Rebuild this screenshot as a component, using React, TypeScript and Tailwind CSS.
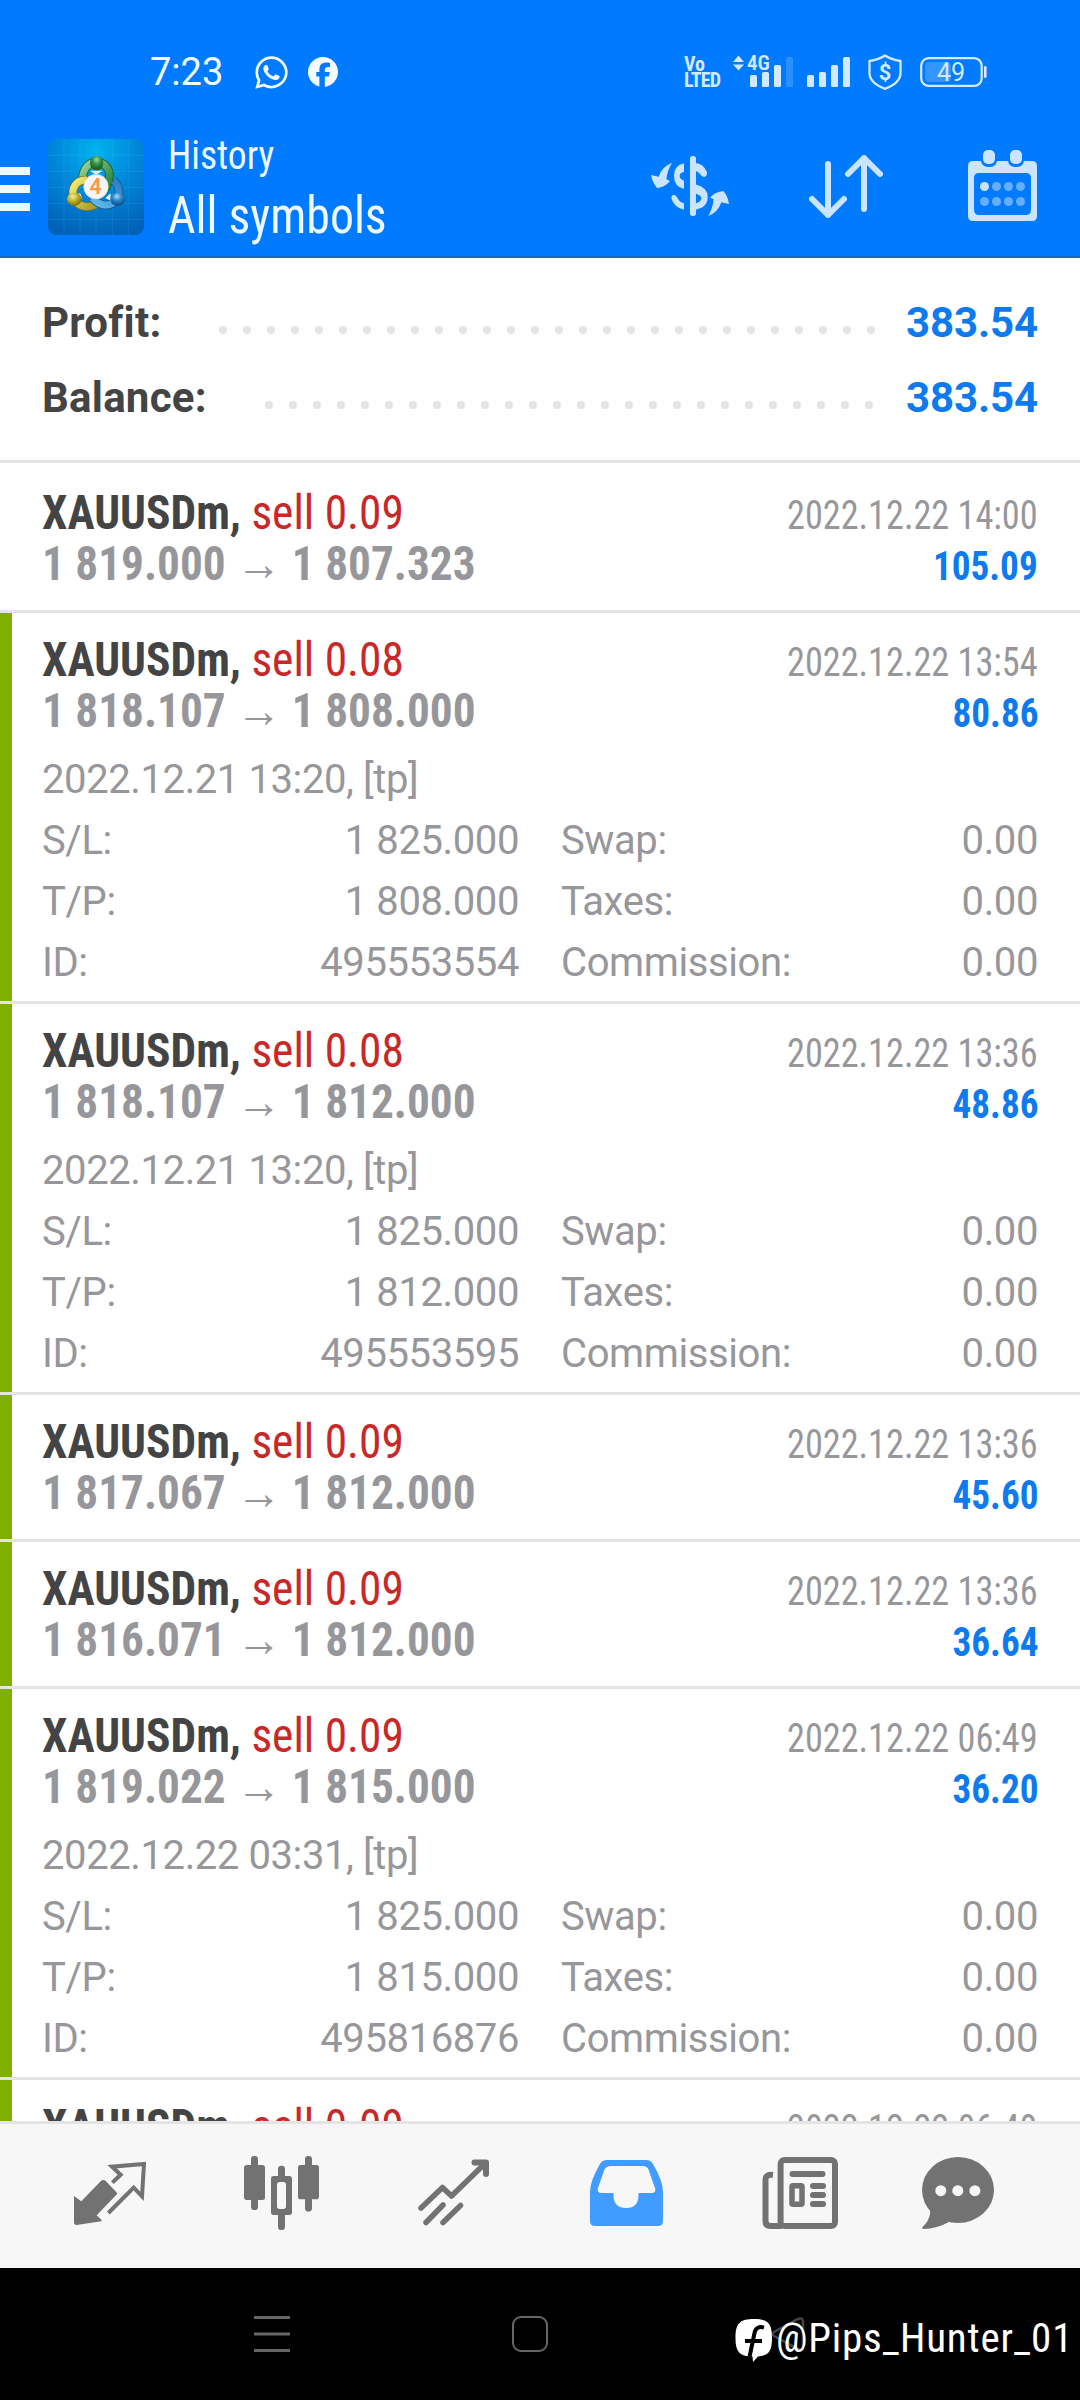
import { FaFacebook, FaWhatsapp } from 'react-icons/fa6';

type Deal = {
  volume: string;
  open: string;
  close: string;
  closedAt: string;
  profit: string;
  takeProfitHit?: boolean;
  details?: { openedAt: string; sl: string; tp: string; id: string };
};

const deals: Deal[] = [
  { volume: '0.09', open: '1 819.000', close: '1 807.323', closedAt: '2022.12.22 14:00', profit: '105.09' },
  {
    volume: '0.08', open: '1 818.107', close: '1 808.000', closedAt: '2022.12.22 13:54', profit: '80.86', takeProfitHit: true,
    details: { openedAt: '2022.12.21 13:20, [tp]', sl: '1 825.000', tp: '1 808.000', id: '495553554' },
  },
  {
    volume: '0.08', open: '1 818.107', close: '1 812.000', closedAt: '2022.12.22 13:36', profit: '48.86', takeProfitHit: true,
    details: { openedAt: '2022.12.21 13:20, [tp]', sl: '1 825.000', tp: '1 812.000', id: '495553595' },
  },
  { volume: '0.09', open: '1 817.067', close: '1 812.000', closedAt: '2022.12.22 13:36', profit: '45.60', takeProfitHit: true },
  { volume: '0.09', open: '1 816.071', close: '1 812.000', closedAt: '2022.12.22 13:36', profit: '36.64', takeProfitHit: true },
  {
    volume: '0.09', open: '1 819.022', close: '1 815.000', closedAt: '2022.12.22 06:49', profit: '36.20', takeProfitHit: true,
    details: { openedAt: '2022.12.22 03:31, [tp]', sl: '1 825.000', tp: '1 815.000', id: '495816876' },
  },
  { volume: '0.09', open: '1 819.022', close: '1 815.000', closedAt: '2022.12.22 06:49', profit: '36.20', takeProfitHit: true },
];

const StatusBar = () => (
  <div className="flex h-[118px] items-center justify-between pt-[26px] pr-[92px] pl-[150px] text-[#f4fbff]">
    <div className="flex items-center">
      <span className="w-[103px] text-[38px] leading-none font-[450]">7:23</span>
      <FaWhatsapp className="size-[37px]" />
      <FaFacebook className="ml-[18px] size-[30px]" />
    </div>
    <div className="flex items-center text-[#d3e9ff]">
      <div className="flex w-[49px] flex-col font-bold font-stretch-[75%]">
        <span className="text-[20px] leading-[16px]">Vo</span>
        <span className="text-[20px] leading-[16px] tracking-[-0.8px]">LTED</span>
      </div>
      <svg className="h-[36px] w-[118px]" viewBox="733 54 118 36" fill="currentColor">
        <path d="M733 62 L738.500 55.500 L744 62Z M733 64.500 L738.500 70.500 L744 64.500Z" />
        <text x="747" y="70" fontSize="21" fontWeight="600" className="font-stretch-[75%]">4G</text>
        <rect x="750" y="75" width="7" height="12" rx="1.500" />
        <rect x="762" y="72" width="7" height="15" rx="1.500" />
        <rect x="774" y="65" width="7" height="22" rx="1.500" />
        <rect x="786" y="57" width="7" height="30" rx="1.500" opacity=".2" />
        <rect x="807" y="75" width="7" height="12" rx="1.500" />
        <rect x="819" y="72" width="7" height="15" rx="1.500" />
        <rect x="831" y="65" width="7" height="22" rx="1.500" />
        <rect x="843" y="57" width="7" height="30" rx="1.500" />
      </svg>
      <svg className="ml-[16px] h-[38px] w-[36px]" viewBox="867 53 36 38">
        <path d="M885 55.500 Q891 59.500 900.500 61 V73 Q900.500 83 885 88.800 Q869.500 83 869.500 73 V61 Q879 59.500 885 55.500Z" fill="none" stroke="currentColor" strokeWidth="2.300" strokeLinejoin="round" />
        <text x="885" y="80" textAnchor="middle" fontSize="22" fontWeight="700" fill="currentColor">$</text>
      </svg>
      <svg className="ml-[17px] h-[32px] w-[68px]" viewBox="920 56 68 32">
        <rect x="921.200" y="58.200" width="60.500" height="27.600" rx="7.500" fill="none" stroke="currentColor" strokeWidth="2.300" />
        <rect x="925" y="62" width="26" height="20" rx="4" fill="currentColor" opacity=".25" />
        <rect x="984" y="66" width="2.600" height="12" rx="1.300" fill="currentColor" />
        <text x="951" y="81" textAnchor="middle" fontSize="25" fill="currentColor">49</text>
      </svg>
    </div>
  </div>
);

const MetaTraderLogo = () => (
  <svg className="ml-[18px] size-[96px]" viewBox="24 27 288 288">
    <defs>
      <radialGradient id="sky" cx="50%" cy="12%" r="90%">
        <stop offset="0" stopColor="#00b4ee" />
        <stop offset=".45" stopColor="#0089dc" />
        <stop offset="1" stopColor="#0062b8" />
      </radialGradient>
      <linearGradient id="green" x1="0" y1="0" x2="1" y2="1">
        <stop offset="0" stopColor="#9bd39a" />
        <stop offset="1" stopColor="#1f7a34" />
      </linearGradient>
      <linearGradient id="yellow" x1="0" y1="0" x2="1" y2="1">
        <stop offset="0" stopColor="#f5ee7a" />
        <stop offset="1" stopColor="#a89a1c" />
      </linearGradient>
      <linearGradient id="blue" x1="1" y1="0" x2="0" y2="1">
        <stop offset="0" stopColor="#2a7cc4" />
        <stop offset="1" stopColor="#62bdf0" />
      </linearGradient>
      <radialGradient id="greenBall" cx="50%" cy="28%" r="65%">
        <stop offset="0" stopColor="#a3d8a0" />
        <stop offset=".5" stopColor="#2f8f42" />
        <stop offset="1" stopColor="#176127" />
      </radialGradient>
      <radialGradient id="yellowBall" cx="40%" cy="30%" r="65%">
        <stop offset="0" stopColor="#f2efa0" />
        <stop offset=".5" stopColor="#c4b62b" />
        <stop offset="1" stopColor="#82760f" />
      </radialGradient>
      <radialGradient id="blueBall" cx="45%" cy="28%" r="65%">
        <stop offset="0" stopColor="#a8d8f5" />
        <stop offset=".5" stopColor="#2a85c8" />
        <stop offset="1" stopColor="#0f5490" />
      </radialGradient>
    </defs>
    <rect x="24" y="27" width="288" height="288" rx="26" fill="url(#sky)" />
    <path d="M72 27V315M120 27V315M168 27V315M217 27V315M265 27V315M24 76H312M24 124H312M24 172H312M24 221H312M24 269H312" stroke="#6fd0ff" strokeOpacity=".2" strokeWidth="2" />
    <g fill="none" strokeLinejoin="round">
      <path d="M130 158 C122 126 142 96 170 96 C200 98 214 124 206 152 C202 166 198 176 190 182" stroke="#14602a" strokeWidth="26" />
      <path d="M130 158 C122 126 142 96 170 96 C200 98 214 124 206 152 C202 166 198 176 190 182" stroke="url(#green)" strokeWidth="21" />
      <path d="M140 150 C108 148 92 176 102 204 C112 230 142 236 166 224" stroke="#857813" strokeWidth="26" />
      <path d="M140 150 C108 148 92 176 102 204 C112 230 142 236 166 224" stroke="url(#yellow)" strokeWidth="21" />
      <path d="M220 152 C242 168 242 202 224 216 C204 232 176 226 158 204" stroke="#12548c" strokeWidth="26" />
      <path d="M220 152 C242 168 242 202 224 216 C204 232 176 226 158 204" stroke="url(#blue)" strokeWidth="21" />
      <path d="M150 122 L168 134 L188 122Z M122 192 L128 210 L114 188Z M196 204 L212 190 L212 212Z" fill="#e8f3ea" />
    </g>
    <ellipse cx="170" cy="99" rx="20" ry="22" fill="url(#greenBall)" />
    <ellipse cx="103" cy="208" rx="22" ry="20" fill="url(#yellowBall)" />
    <ellipse cx="233" cy="208" rx="22" ry="20" fill="url(#blueBall)" />
    <circle cx="168" cy="170" r="37" fill="#f7f5f3" stroke="#cdd3c8" strokeWidth="2" />
    <text x="167" y="192" textAnchor="middle" fontSize="64" fontWeight="600" fill="#f29a4a">4</text>
  </svg>
);

const AppBar = () => (
  <div className="flex h-[138px] items-center text-[#eef8ff]">
    <div className="flex w-[30px] flex-col gap-[10px] pt-1">
      <div className="h-2 bg-current" />
      <div className="h-2 bg-current" />
      <div className="h-2 bg-current" />
    </div>
    <MetaTraderLogo />
    <div className="ml-6 flex-1 pt-px font-stretch-[75%]">
      <p className="origin-left scale-x-[0.94] text-[40px] leading-[56px]">History</p>
      <h1 className="origin-left scale-x-[0.92] text-[52px] leading-[64px]">All symbols</h1>
    </div>
    <svg className="mt-[-2px] h-[60px] w-[78px]" viewBox="33 45 234 180" fill="#cbe4ff">
      <rect x="150" y="45" width="18" height="180" rx="8" />
      <path d="M33 102 L56 107 Q66 76 96 66 Q82 88 79 115 L90 120 Q76 138 51 141 Q37 124 33 102Z" />
      <path d="M267 189 L244 184 Q234 214 205 225 Q218 202 221 175 L210 170 Q226 152 250 150 Q264 166 267 189Z" />
      <path d="M132 67 V93 Q119 95 119 105 Q119 115 132 119 V144 Q102 137 102 105 Q102 72 132 67Z" />
      <path d="M132 187 V206 Q102 200 94 172 Q94 160 104 162 Q110 164 113 172 Q118 184 132 187Z" />
      <path d="M166 66 Q190 68 201 93 Q202 107 192 108 Q184 108 181 100 Q176 92 166 89Z" />
      <path fillRule="evenodd" d="M166 130 Q203 139 203 168 Q203 200 166 206Z M168 158 V187 Q184 182 184 172 Q184 163 168 158Z" />
    </svg>
    <svg className="ml-20 h-[64px] w-[74px]" viewBox="809 155 74 64" fill="none" stroke="#cbe4ff" strokeWidth="6" strokeLinecap="round" strokeLinejoin="round">
      <path d="M828 164V215M812 199L828 215L844 199" />
      <path d="M864 209V158M848 174L864 158L880 174" />
    </svg>
    <svg className="mt-[-3px] mr-[43px] ml-[85px] h-[71px] w-[69px]" viewBox="968 150 69 71" fill="#cbe4ff">
      <path fillRule="evenodd" d="M973 161 H981 Q982 167 989 167 Q996 167 997 161 H1008 Q1009 167 1016 167 Q1023 167 1024 161 H1032 Q1037 161 1037 166 V216 Q1037 221 1032 221 H973 Q968 221 968 216 V166 Q968 161 973 161Z M979 173 Q974 173 974 178 V209 Q974 215 979 215 H1026 Q1031 215 1031 209 V178 Q1031 173 1026 173Z" />
      <rect x="983" y="150" width="12" height="14" rx="5" />
      <rect x="1010" y="150" width="12" height="14" rx="5" />
      <circle cx="984.500" cy="186.500" r="4.500" />
      <g opacity=".5">
        <circle cx="996.500" cy="186.500" r="4.500" />
        <circle cx="1008.500" cy="186.500" r="4.500" />
        <circle cx="1020.500" cy="186.500" r="4.500" />
        <circle cx="984.500" cy="201.500" r="4.500" />
        <circle cx="996.500" cy="201.500" r="4.500" />
        <circle cx="1008.500" cy="201.500" r="4.500" />
        <circle cx="1020.500" cy="201.500" r="4.500" />
      </g>
    </svg>
  </div>
);

const SummaryRow = ({ label, value, dots }: { label: string; value: string; dots: number }) => (
  <div className="flex h-[75px] items-center text-[42px] font-bold">
    <span className="tracking-[0.25px] text-[#444]">{label}</span>
    <div className="ml-[58px] flex flex-1 gap-4 pt-[14px]">
      {Array.from({ length: dots }, (_, i) => (
        <span key={i} className="size-2 rounded-full bg-[#e4e4e4]" />
      ))}
    </div>
    <span className="tracking-[-0.1px] text-[#0d7af0]">{value}</span>
  </div>
);

const DetailRow = ({ left, right }: { left: [string, string]; right: string }) => (
  <div className="flex h-[61px] items-center">
    <div className="flex w-[477px] justify-between">
      <span>{left[0]}</span>
      <span>{left[1]}</span>
    </div>
    <div className="ml-[42px] flex flex-1 justify-between">
      <span>{right}</span>
      <span>0.00</span>
    </div>
  </div>
);

const DealRow = ({ deal }: { deal: Deal }) => (
  <div className="shrink-0 border-b-3 border-[#e4e4e4] bg-white">
    <div className={`pr-[42px] ${deal.takeProfitHit ? 'border-l-12 border-[#7fb000] pl-[30px]' : 'pl-[42px]'} ${deal.details ? 'h-[388px]' : 'h-[144px]'}`}>
      <div className="pt-[21px] leading-[51px] font-stretch-[75%]">
        <div className="flex h-[51px] items-baseline justify-between">
          <p className="origin-left scale-x-[0.946] text-[48px]">
            <span className="font-bold text-[#444]">XAUUSDm, </span>
            <span className="text-[#c92828]">sell {deal.volume}</span>
          </p>
          <span className="origin-right scale-x-[0.906] text-[40px] text-[#97979b]">{deal.closedAt}</span>
        </div>
        <div className="flex h-[51px] items-baseline justify-between font-bold">
          <span className="origin-left scale-x-[0.943] text-[48px] text-[#97979b]">{deal.open} → {deal.close}</span>
          <span className="origin-right scale-x-[0.93] text-[40px] text-[#0d7af0]">{deal.profit}</span>
        </div>
      </div>
      {deal.details && (
        <div className="mt-[13px] text-[40px] tracking-[-0.4px] text-[#97979b]">
          <p className="leading-[61px]">{deal.details.openedAt}</p>
          <DetailRow left={['S/L:', deal.details.sl]} right="Swap:" />
          <DetailRow left={['T/P:', deal.details.tp]} right="Taxes:" />
          <DetailRow left={['ID:', deal.details.id]} right="Commission:" />
        </div>
      )}
    </div>
  </div>
);

const TabBar = () => (
  <nav className="flex h-[147px] shrink-0 items-center border-t-3 border-[#e4e4e4] bg-[#f7f7f7] pb-[7px] pl-[74px] text-[#727272]">
    <svg className="h-[64px] w-[72px]" viewBox="42 66 216 192" fill="currentColor">
      <path d="M42 171 L64 187 L122 127 Q130 119 138 127 L168 158 Q174 163 168 169 L110 229 L125 243 L124 247 L50 258 Q42 258 42 250Z" />
      <path d="M157 131 L182 107 L156 83 L252 75 L246 172 L221 146 L145 222" fill="none" stroke="currentColor" strokeWidth="12" />
    </svg>
    <svg className="ml-[98px] h-[74px] w-[75px]" viewBox="552 51 225 222" fill="currentColor">
      <rect x="573" y="51" width="21" height="162" rx="10" />
      <rect x="552" y="78" width="63" height="105" rx="8" />
      <rect x="654" y="80" width="21" height="193" rx="10" />
      <rect x="633" y="111" width="63" height="117" rx="8" />
      <rect x="651" y="129" width="27" height="81" rx="8" fill="#f7f7f7" />
      <rect x="735" y="51" width="21" height="167" rx="10" />
      <rect x="714" y="78" width="63" height="103" rx="8" />
    </svg>
    <svg className="ml-[99px] h-[67px] w-[72px]" viewBox="418 2159.500 72 67" fill="none" stroke="currentColor" strokeWidth="5.500" strokeLinecap="round" strokeLinejoin="round">
      <path d="M421 2208.500 L442.500 2188 L451.500 2196.500 L485 2164" />
      <path d="M474.500 2163 H486 V2174.500" strokeWidth="6" />
      <path d="M426 2223 L443 2205.500 M443 2223 L460.500 2206" />
    </svg>
    <svg className="ml-[100px] h-[66px] w-[73px]" viewBox="590 2160 73 66" fill="#429cff" fillRule="evenodd">
      <path d="M607 2160 H646 Q651 2160 653 2164 Q663 2181 663 2192 V2221 Q663 2226 658 2226 H595 Q590 2226 590 2221 V2192 Q590 2181 600 2164 Q602 2160 607 2160Z M611 2166 Q606 2166 604.500 2169.500 L598 2188 Q596.500 2193 602 2193 H613.500 V2195 Q613.500 2208 626.200 2208 Q638.500 2208 638.500 2195 V2193 H651.500 Q656.500 2193 655 2188 L648.500 2169.500 Q647 2166 642.500 2166Z" />
    </svg>
    <svg className="ml-[99px] h-[72px] w-[76px]" viewBox="762 2157 76 72" fill="none" stroke="currentColor" strokeWidth="6">
      <rect x="780.600" y="2160" width="54.400" height="66" rx="4" />
      <path d="M773 2175 Q765.500 2174 765.500 2180 V2221 Q765.500 2226 770.500 2226 H782" />
      <path d="M792.500 2174 H822.500 M813 2186 H823 M813 2195 H823 M813 2204 H823" strokeLinecap="round" />
      <rect x="792" y="2185.700" width="10" height="18.600" rx="1" strokeWidth="5.500" />
    </svg>
    <svg className="ml-[84px] h-[72px] w-[72px]" viewBox="922 2157 72 72" fill="currentColor">
      <ellipse cx="958" cy="2190" rx="36" ry="33" />
      <path d="M927 2205 Q931 2210 930 2214 Q929 2221 922.500 2227 Q921.500 2229 924 2229 Q936 2229 949 2222Z" />
      <g fill="#f7f7f7">
        <circle cx="940.800" cy="2190.700" r="5.500" />
        <circle cx="957.800" cy="2190.700" r="5.500" />
        <circle cx="974.900" cy="2190.700" r="5.500" />
      </g>
    </svg>
  </nav>
);

const SystemNav = () => (
  <div className="relative flex h-[132px] shrink-0 items-center bg-black pl-[254px]">
    <svg className="h-[36px] w-[36px]" viewBox="0 0 36 36" stroke="#666" strokeWidth="3">
      <path d="M0 1.500H36M0 18H36M0 34.500H36" />
    </svg>
    <div className="ml-[222px] size-9 rounded-[9px] border-[2.5px] border-[#666]" />
    <svg className="ml-[223px] h-[36px] w-[34px]" viewBox="0 0 34 36" fill="none" stroke="#444" strokeWidth="2.500">
      <path d="M3 16 L27 3 Q32 1 32 6 V30 Q32 35 27 33 L3 20 Q0 18 3 16Z" />
    </svg>
    <div className="absolute top-[46px] left-[735px] flex items-center text-white">
      <svg className="mt-1 h-[44px] w-[38px]" viewBox="0 0 38 44">
        <path d="M19 1 C33 1 37 5 37 20 C37 33 34 37.500 23 38.500 L18 44 L17.500 38.500 C5 38.500 .5 34 .5 20 C.5 5 5 1 19 1Z" fill="#fff" />
        <path d="M29 9.500 Q21 7.500 19.500 15 L14.500 39 M10 23 H27" fill="none" stroke="#000" strokeWidth="4" />
      </svg>
      <span className="ml-[3px] text-[41px] leading-[44px] tracking-[0.8px] whitespace-nowrap font-stretch-[86%]">@Pips_Hunter_01</span>
    </div>
  </div>
);

export default function App() {
  return (
    <div className="flex h-[2400px] w-[1080px] flex-col overflow-hidden bg-white font-['Roboto',sans-serif]">
      <header className="h-[258px] shrink-0 border-b-2 border-[#1f68b8] bg-[#007aff]">
        <StatusBar />
        <AppBar />
      </header>
      <section className="h-[205px] shrink-0 border-b-3 border-[#e4e4e4] px-[42px] pt-[27px]">
        <SummaryRow label="Profit:" value="383.54" dots={28} />
        <SummaryRow label="Balance:" value="383.54" dots={26} />
      </section>
      <main className="flex min-h-0 flex-1 flex-col overflow-hidden pt-[3px]">
        {deals.map((deal, i) => (
          <DealRow key={i} deal={deal} />
        ))}
      </main>
      <TabBar />
      <SystemNav />
    </div>
  );
}
